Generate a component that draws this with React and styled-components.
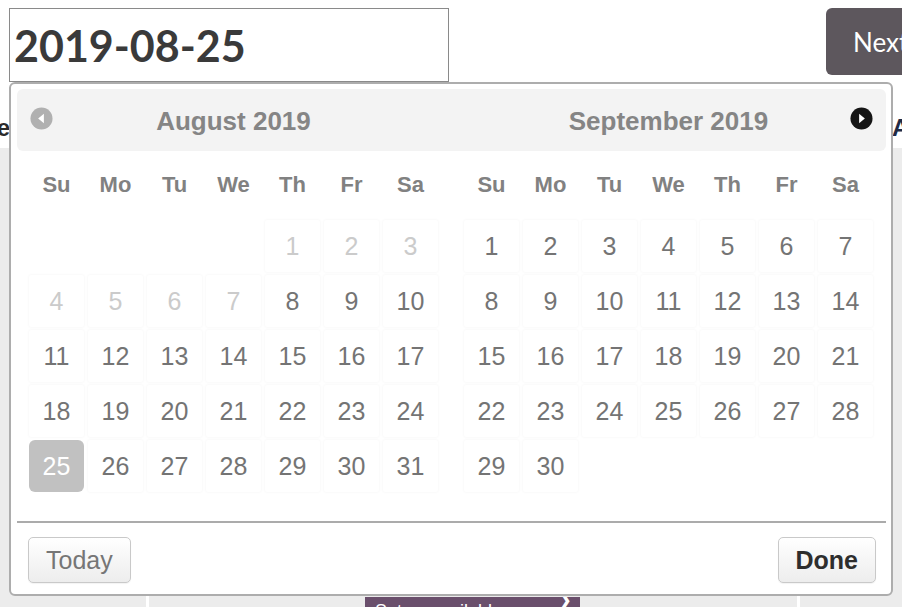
import React from 'react';
import styled, { createGlobalStyle } from 'styled-components';

const GlobalStyle = createGlobalStyle`
  html, body {
    margin: 0;
    padding: 0;
    background: #fff;
    font-family: "Liberation Sans", Arial, sans-serif;
  }
`;

const months = [
  { title: 'August 2019', offset: 4, days: 31, disabledUntil: 7, selected: 25 },
  { title: 'September 2019', offset: 0, days: 30, disabledUntil: 0, selected: null },
];

const weekDays = ['Su', 'Mo', 'Tu', 'We', 'Th', 'Fr', 'Sa'];

const PrevIcon = () => (
  <svg width="23" height="23" viewBox="0 0 24 24">
    <circle cx="12" cy="12" r="11.5" fill="#b0b0b0" />
    <path d="M14.5 7 L8.5 12 L14.5 17 Z" fill="#fff" />
  </svg>
);

const NextIcon = () => (
  <svg width="23" height="23" viewBox="0 0 24 24">
    <circle cx="12" cy="12" r="11.5" fill="#151515" />
    <path d="M9.5 7 L15.5 12 L9.5 17 Z" fill="#fff" />
  </svg>
);

const buildCells = (m) => {
  const cells = [];
  for (let i = 0; i < m.offset; i += 1) cells.push(<Empty key={`e${i}`} />);
  for (let d = 1; d <= m.days; d += 1) {
    cells.push(
      <Day key={d} $disabled={d <= m.disabledUntil} $selected={d === m.selected}>
        {d}
      </Day>
    );
  }
  return cells;
};

const App = () => (
  <Page>
    <GlobalStyle />
    <TopBar>
      <DateInput>2019-08-25</DateInput>
      <NextButton>Next</NextButton>
    </TopBar>
    <HeadingRow>
      <LeftLabel>Pickup date</LeftLabel>
      <RightLabel>Available</RightLabel>
    </HeadingRow>
    <Table>
      <Column $width="146px" />
      <Column $width="648px">
        <SetButton>
          Set as available
          <Chevron>❯</Chevron>
        </SetButton>
      </Column>
      <Column $width="auto" $last />
    </Table>

    <Picker>
      <Header>
        <MonthHead>
          <IconSlot><PrevIcon /></IconSlot>
          <MonthTitle>{months[0].title}</MonthTitle>
          <IconSlot />
        </MonthHead>
        <MonthHead>
          <IconSlot />
          <MonthTitle>{months[1].title}</MonthTitle>
          <IconSlot><NextIcon /></IconSlot>
        </MonthHead>
      </Header>

      <Months>
        {months.map((m) => (
          <Calendar key={m.title}>
            <WeekRow>
              {weekDays.map((w) => (
                <WeekDay key={w}>{w}</WeekDay>
              ))}
            </WeekRow>
            <DayGrid>{buildCells(m)}</DayGrid>
          </Calendar>
        ))}
      </Months>

      <Separator />

      <Footer>
        <FooterButton>Today</FooterButton>
        <FooterButton $primary>Done</FooterButton>
      </Footer>
    </Picker>
  </Page>
);

const Page = styled.div`
  position: relative;
  width: 902px;
  height: 607px;
  overflow: hidden;
  display: flex;
  flex-direction: column;
`;

const TopBar = styled.div`
  display: flex;
  align-items: flex-start;
  padding: 8px 0 0 9px;
  height: 73px;
`;

const DateInput = styled.div`
  box-sizing: border-box;
  width: 440px;
  height: 74px;
  border: 1px solid #8a8a8a;
  padding-left: 4px;
  display: flex;
  align-items: center;
  font-family: Lato, "Open Sans", sans-serif;
  font-weight: 700;
  font-size: 43px;
  color: #3a3a3a;
`;

const NextButton = styled.div`
  margin-left: auto;
  width: 76px;
  height: 67px;
  box-sizing: border-box;
  padding-left: 27px;
  background: #5d575d;
  border-radius: 6px 0 0 6px;
  color: #fff;
  font-family: Lato, "Open Sans", sans-serif;
  font-size: 26px;
  display: flex;
  align-items: center;
  white-space: nowrap;
  overflow: hidden;
`;

const HeadingRow = styled.div`
  height: 67px;
  display: flex;
  justify-content: space-between;
  align-items: center;
  padding-top: 26px;
  box-sizing: border-box;
  font-weight: 700;
  font-size: 24px;
`;

const LeftLabel = styled.div`
  width: 10px;
  overflow: hidden;
  direction: rtl;
  white-space: nowrap;
  color: #2a2a2a;
`;

const RightLabel = styled.div`
  width: 10px;
  overflow: hidden;
  white-space: nowrap;
  color: #1f2a44;
`;

const Table = styled.div`
  flex: 1;
  display: flex;
  background: #ececec;
`;

const Column = styled.div`
  width: ${(p) => p.$width};
  flex: ${(p) => (p.$last ? 1 : 'none')};
  border-right: ${(p) => (p.$last ? 'none' : '3px solid #fff')};
  display: flex;
  flex-direction: column;
  justify-content: flex-end;
`;

const SetButton = styled.div`
  margin-left: 216px;
  width: 215px;
  height: 10px;
  background: #6a4f6c;
  color: #fff;
  font-size: 18px;
  line-height: 28px;
  padding-left: 10px;
  box-sizing: border-box;
  overflow: hidden;
  position: relative;
  white-space: nowrap;
`;

const Chevron = styled.span`
  position: absolute;
  right: 8px;
  top: -11px;
  font-size: 18px;
`;

const Picker = styled.div`
  position: absolute;
  top: 82px;
  left: 9px;
  width: 884px;
  height: 514px;
  box-sizing: border-box;
  border: 2px solid #adadad;
  border-radius: 6px;
  background: #fff;
  padding: 5px 5px 0 6px;
  display: flex;
  flex-direction: column;
`;

const Header = styled.div`
  height: 62px;
  background: #f3f3f3;
  border-radius: 6px;
  display: grid;
  grid-template-columns: 409px 409px;
  column-gap: 26px;
  padding: 0 12px;
  align-items: center;
`;

const MonthHead = styled.div`
  display: grid;
  grid-template-columns: 24px 1fr 24px;
  align-items: center;
`;

const IconSlot = styled.div`
  display: flex;
  align-items: center;
  justify-content: center;
  height: 24px;
  margin-top: -4px;
`;

const MonthTitle = styled.div`
  text-align: center;
  font-weight: 700;
  font-size: 26px;
  color: #858585;
  margin-top: 2px;
`;

const Months = styled.div`
  display: flex;
  gap: 26px;
  padding: 0 12px;
  margin-top: 8px;
`;

const Calendar = styled.div`
  width: 409px;
`;

const WeekRow = styled.div`
  display: grid;
  grid-template-columns: repeat(7, 55px);
  column-gap: 4px;
  height: 52px;
  align-items: center;
  margin-bottom: 9px;
`;

const WeekDay = styled.div`
  text-align: center;
  font-weight: 700;
  font-size: 22px;
  color: #818181;
`;

const DayGrid = styled.div`
  display: grid;
  grid-template-columns: repeat(7, 55px);
  grid-auto-rows: 52px;
  column-gap: 4px;
  row-gap: 3px;
`;

const Empty = styled.div``;

const Day = styled.div`
  display: flex;
  align-items: center;
  justify-content: center;
  font-size: 25px;
  border-radius: ${(p) => (p.$selected ? '6px' : '2px')};
  background: ${(p) => (p.$selected ? '#c1c1c1' : '#fff')};
  box-shadow: ${(p) => (p.$selected ? 'none' : '0 0 3px rgba(0, 0, 0, 0.055)')};
  color: ${(p) => (p.$selected ? '#fff' : p.$disabled ? '#cbcbcb' : '#747474')};
`;

const Separator = styled.div`
  height: 2px;
  background: #ababab;
  margin-top: 29px;
`;

const Footer = styled.div`
  display: flex;
  justify-content: space-between;
  padding: 14px 10px 0 11px;
`;

const FooterButton = styled.div`
  height: 46px;
  box-sizing: border-box;
  padding: 0 ${(p) => (p.$primary ? '17px' : '17px')};
  display: flex;
  align-items: center;
  border: 1px solid #c9c9c9;
  border-radius: 5px;
  background: linear-gradient(#ffffff, #ededed);
  box-shadow: 0 1px 1px rgba(0, 0, 0, 0.05);
  font-size: 25px;
  font-weight: ${(p) => (p.$primary ? 700 : 400)};
  color: ${(p) => (p.$primary ? '#2e2e2e' : '#767676')};
`;

export default App;
